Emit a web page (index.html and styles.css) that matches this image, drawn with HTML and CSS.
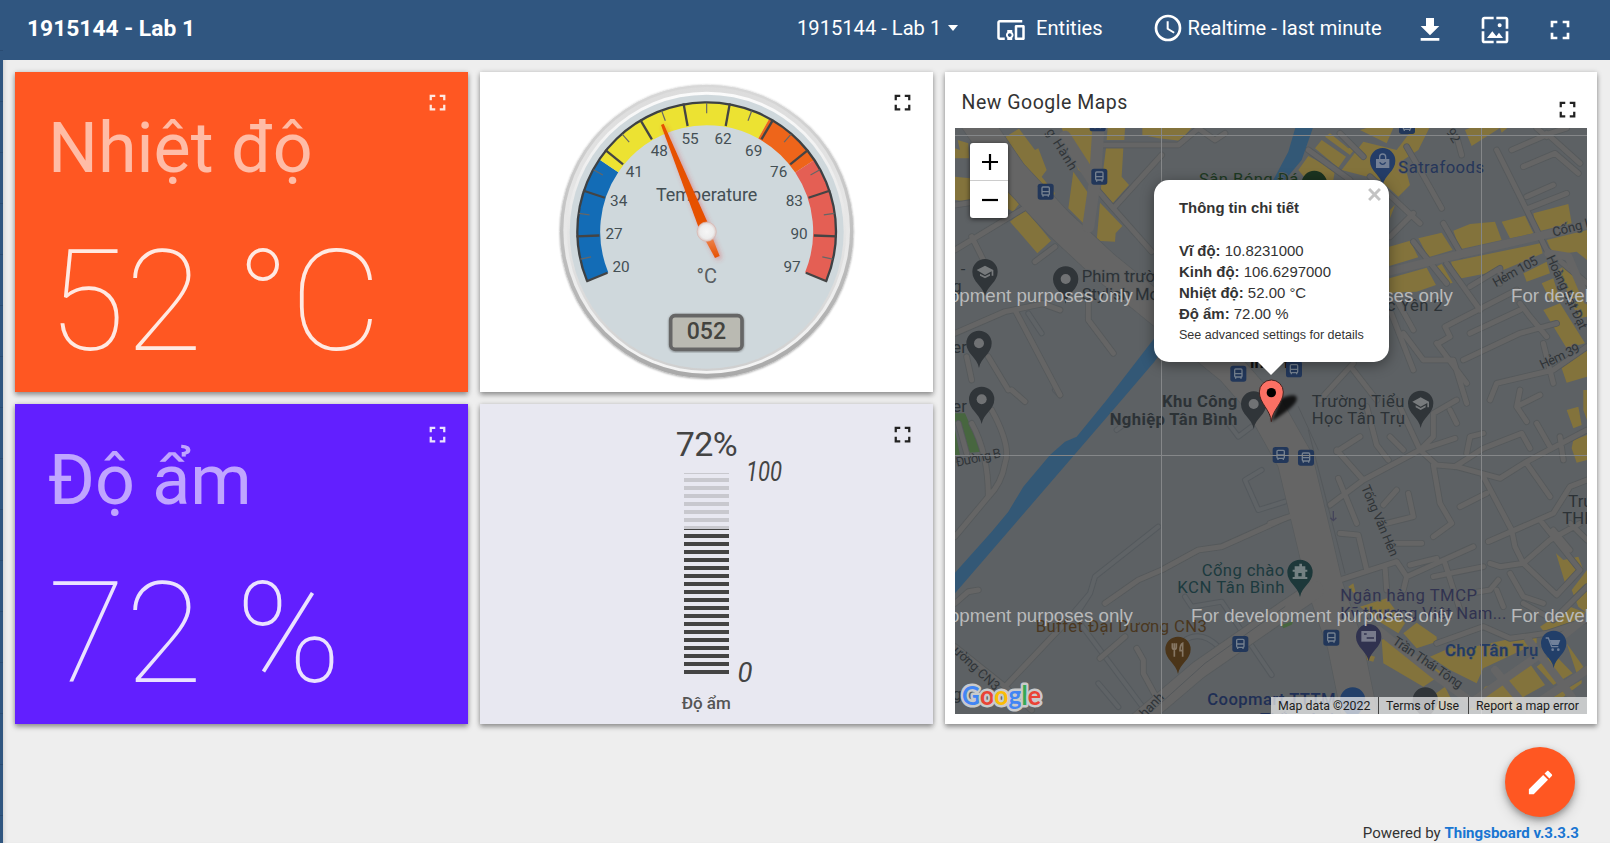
FILE: index.html
```html
<!DOCTYPE html>
<html lang="vi">
<head>
<meta charset="utf-8">
<title>1915144 - Lab 1</title>
<link rel="stylesheet" href="styles.css">
</head>
<body>
<svg class="defs" width="0" height="0">
  <symbol id="i-full" viewBox="0 0 24 24"><path d="M7 14H5v5h5v-2H7v-3zm-2-4h2V7h3V5H5v5zm12 7h-3v2h5v-5h-2v3zM14 5v2h3v3h2V5h-5z"/></symbol>
</svg>
<div class="app">
  <aside class="side"></aside>
  <div class="main">
    <header class="bar">
      <h1 class="title">1915144 - Lab 1</h1>
      <nav class="tools">
        <span class="state">1915144 - Lab 1</span>
        <span class="caret"></span>
        <svg class="i30" viewBox="0 0 24 24"><path d="M3 6h18V4H3c-1.1 0-2 .9-2 2v12c0 1.1.9 2 2 2h4v-2H3V6zm10 6H9v1.780c-.61.550-1 1.330-1 2.220s.390 1.670 1 2.220V20h4v-1.780c.610-.550 1-1.340 1-2.220s-.390-1.670-1-2.220V12zm-2 5.500c-.830 0-1.500-.670-1.500-1.500s.670-1.500 1.500-1.500 1.500.670 1.500 1.500-.670 1.500-1.500 1.500zM22 8h-6c-.5 0-1 .5-1 1v10c0 .5.5 1 1 1h6c.5 0 1-.5 1-1V9c0-.5-.5-1-1-1zm-1 10h-4v-8h4v8z"/></svg>
        <span class="entities">Entities</span>
        <svg class="i32" viewBox="0 0 24 24"><circle cx="12" cy="12" r="9" fill="none" stroke="#fff" stroke-width="2"/><path d="M12.500 7H11v6l5.250 3.150.750-1.230-4.500-2.670z"/></svg>
        <span class="time">Realtime - last minute</span>
        <svg class="i32 act" viewBox="0 0 24 24"><path d="M19 9h-4V3H9v6H5l7 7 7-7zM5 18v2h14v-2H5z"/></svg>
        <svg class="i32 act" viewBox="0 0 24 24"><path d="M4 4h7V2H4c-1.100 0-2 .9-2 2v7h2V4zm6 9l-4 5h12l-3-4-2.030 2.710L10 13zm7-4.500c0-.830-.670-1.500-1.500-1.500S14 7.670 14 8.500s.670 1.500 1.500 1.500S17 9.330 17 8.500zM20 2h-7v2h7v7h2V4c0-1.100-.9-2-2-2zm0 18h-7v2h7c1.100 0 2-.9 2-2v-7h-2v7zM4 13H2v7c0 1.100.9 2 2 2h7v-2H4v-7z"/></svg>
        <svg class="i32 act"><use href="#i-full"/></svg>
      </nav>
    </header>

    <main class="grid">
      <section class="card temp">
        <svg class="full"><use href="#i-full"/></svg>
        <div class="label">Nhiệt độ</div>
        <div class="value">52 °C</div>
      </section>

      <section class="card">
        <svg class="full"><use href="#i-full"/></svg>
        <svg class="draw" viewBox="0 0 453 320">
          <defs>
            <linearGradient id="rim" x1="0" y1="0" x2="0" y2="1"><stop offset="0" stop-color="#d8d8d8"/><stop offset="1" stop-color="#a9a9a9"/></linearGradient>
            <linearGradient id="rim2" x1="0" y1="0" x2="0" y2="1"><stop offset="0" stop-color="#dcdcdc"/><stop offset="1" stop-color="#f4f4f4"/></linearGradient>
            <linearGradient id="rim3" x1="0" y1="0" x2="0" y2="1"><stop offset="0" stop-color="#fbfbfb"/><stop offset="1" stop-color="#cfcfcf"/></linearGradient>
            <radialGradient id="knob"><stop offset="0" stop-color="#f6f6f6"/><stop offset=".7" stop-color="#ededed"/><stop offset="1" stop-color="#dcc9c6"/></radialGradient>
            <linearGradient id="tail" x1="0" y1="0" x2="0" y2="1"><stop offset="0" stop-color="#ef9468"/><stop offset="1" stop-color="#e65100"/></linearGradient>
            <filter id="glow" x="-50%" y="-50%" width="200%" height="200%"><feDropShadow dx="6" dy="6" stdDeviation="8" flood-color="#e04040" flood-opacity=".45"/></filter>
            <filter id="sh" x="-10%" y="-10%" width="120%" height="120%"><feDropShadow dx="0" dy="2" stdDeviation="3" flood-color="#000" flood-opacity=".45"/></filter>
          </defs>
          <g transform="translate(60 -2) scale(.33333)">
            <g transform="translate(500 484)">
              <circle r="440" fill="url(#rim)" filter="url(#sh)"/>
              <circle cy="-3" r="430" fill="url(#rim2)"/>
              <circle r="419" fill="url(#rim3)"/>
              <circle cy="1" r="411" fill="#cfd8dc"/>
              <g fill="none" stroke-width="67" transform="translate(0 1)">
                <circle r="353" pathLength="360" stroke="#136cb6" stroke-dasharray="56.400 360" transform="rotate(157.500)"/>
                <circle r="353" pathLength="360" stroke="#ece232" stroke-dasharray="85.100 360" transform="rotate(213.900)"/>
                <circle r="353" pathLength="360" stroke="#ee651a" stroke-dasharray="27.300 360" transform="rotate(299)"/>
                <circle r="353" pathLength="360" stroke="#e45f54" stroke-dasharray="56.200 360" transform="rotate(326.300)"/>
                <circle r="388" pathLength="360" stroke="#3d4144" stroke-width="7" stroke-dasharray="225 360" transform="rotate(157.500)"/>
              </g>
              <g stroke="#444" stroke-width="7" transform="translate(0 1)">
                <path d="M322 0h69" transform="rotate(157.500)"/><path d="M322 0h69" transform="rotate(177.950)"/><path d="M322 0h69" transform="rotate(198.410)"/><path d="M322 0h69" transform="rotate(218.860)"/><path d="M322 0h69" transform="rotate(239.320)"/><path d="M322 0h69" transform="rotate(259.770)"/><path d="M322 0h69" transform="rotate(280.230)"/><path d="M322 0h69" transform="rotate(300.680)"/><path d="M322 0h69" transform="rotate(321.140)"/><path d="M322 0h69" transform="rotate(341.590)"/><path d="M322 0h69" transform="rotate(2.050)"/><path d="M322 0h69" transform="rotate(22.500)"/>
              </g>
              <g stroke="#666" stroke-width="3.500" transform="translate(0 1)">
                <path d="M355 0h32" transform="rotate(167.730)"/><path d="M355 0h32" transform="rotate(188.180)"/><path d="M355 0h32" transform="rotate(208.640)"/><path d="M355 0h32" transform="rotate(229.090)"/><path d="M355 0h32" transform="rotate(249.550)"/><path d="M355 0h32" transform="rotate(270)"/><path d="M355 0h32" transform="rotate(290.450)"/><path d="M355 0h32" transform="rotate(310.910)"/><path d="M355 0h32" transform="rotate(331.360)"/><path d="M355 0h32" transform="rotate(351.820)"/><path d="M355 0h32" transform="rotate(12.270)"/>
              </g>
            </g>
            <g class="nums">
              <text x="243" y="605">20</text><text x="222" y="508">27</text><text x="236" y="409">34</text><text x="283" y="322">41</text><text x="358" y="258">48</text><text x="450" y="222">55</text><text x="549" y="222">62</text><text x="641" y="258">69</text><text x="716" y="322">76</text><text x="763" y="409">83</text><text x="777" y="508">90</text><text x="756" y="605">97</text>
            </g>
            <text class="gt" x="500" y="394" textLength="304">Temperature</text>
            <text class="gu" x="500" y="640">°C</text>
            <g filter="url(#glow)">
              <path fill="#e65100" d="M363 165L371 161L513 480L475 470z"/>
              <path fill="url(#tail)" d="M486 492L510 484L539 558L525 564z"/>
            </g>
            <circle cx="500" cy="485" r="29" fill="url(#knob)" stroke="#d9b5ae" stroke-width="2"/>
            <rect x="392" y="737" width="214" height="101" rx="13" fill="#babab2" stroke="#666" stroke-width="11" filter="url(#sh)"/>
            <text class="lcd" x="440" y="806" textLength="118" lengthAdjust="spacingAndGlyphs">052</text>
          </g>
        </svg>
      </section>

      <section class="card map-card">
        <div class="map-head"><span>New Google Maps</span><svg class="mfull"><use href="#i-full"/></svg></div>
        <div class="map">
          <svg class="draw" viewBox="955 128 632 586">
            <defs>
              <path id="pin" d="M0 74C-6 42-38 32-38 0A38 38 0 1 1 38 0C38 32 6 42 0 74z"/>
              <g id="poi"><use href="#pin"/><circle r="15" fill="#707274"/></g>
              <g id="school"><use href="#pin"/><path fill="#777a7c" d="M-25-5L0-18 25-5V12H20V-1L0 10zM-15 6L0 14 15 6V12L0 20-15 12z"/></g>
              <g id="bus"><rect x="-24" y="-24" width="48" height="48" rx="8" fill="#22375a"/><rect x="-11" y="-14" width="22" height="24" rx="3" fill="none" stroke="#74808f" stroke-width="4"/><path d="M-11 0H11M-8 9v6M8 9v6" stroke="#74808f" stroke-width="4"/></g>
              <filter id="blur" x="-50%" y="-50%" width="200%" height="200%"><feGaussianBlur stdDeviation="5"/></filter>
              <g id="lanes">
                <path d="M30 540L245 410M80 500L130 600M30 790L180 725 300 700M475 225H700L760 175 810 210 840 190M650 255L505 415 620 545M505 415L440 340M430 700V750L505 850M210 720L345 975M65 860L80 930M130 860L190 960M290 700L345 720M270 575L330 530M30 405L75 398"/>
                <g transform="translate(975)"><path d="M680 240L770 420 830 540 951 640M725 240L840 190 890 174M760 290L855 250 925 310M770 380L850 345M775 415L890 370M830 190L930 280M410 230L445 290 515 415M560 200L575 255M520 460L575 555M430 515L530 640M530 580L630 720M360 500L430 430M300 320L450 460M600 650L690 595V640M750 720L600 790M505 820L540 800 525 770 740 660M400 790L460 870 550 870 590 1000M580 870L750 790 860 760M750 700L780 740 830 800M820 820L850 940M660 990L680 940 850 900 951 830M115 240L240 330M210 190L280 260M380 690L430 780M500 820L590 940M800 174L830 200M360 720L430 900M250 880L150 990M250 900L320 990"/></g>
                <g transform="translate(0 960)"><path d="M140 60Q200 170 180 220Q170 280 130 320L30 440M80 100Q130 190 130 320M40 100L65 190M480 640L580 570 650 540 760 480 830 470 1020 385M465 805L540 740M575 775L595 810V850L650 951M350 710L180 890 220 951M30 640L70 605 100 600M30 770L180 890 260 960M200 0L240 35"/></g>
                <g transform="translate(975 960)"><path d="M290 50L320 165 355 210M380 30L450 180 500 225 560 230 690 265 770 215 951 120M210 570L380 515 410 560 610 470M180 345L280 270 450 180 555 145M555 230L640 175 755 130 780 175M450 180L490 140V70L560 30M540 60L560 100M490 225L510 340 545 400 490 440M640 260L725 420 735 470 760 520M655 455L850 370 900 290 951 270M770 220L840 320M570 350L650 310M810 390L930 540 860 615 760 520 690 530 660 520M760 520L840 450 930 400M345 530L350 600M525 520L570 660M420 525L500 505 M490 560L640 530M410 560L400 600M200 180L280 270M200 185L270 140M205 265L260 400M210 430L265 435 290 540M340 345L380 300M350 400L430 380 415 310M360 460H455M720 550L760 620 820 640M600 610L660 600 685 570M500 760L640 710 720 745 830 730 951 690M750 0L740 50 770 95M750 45L810 15M800 100L840 170M880 210L870 140M590 190L600 140 640 130M360 140L400 180M0 400L75 375M850 420L900 480M900 400L951 450M760 640L850 690 951 590M680 600L700 650"/></g>
              </g>
              <path id="faint" d="M515 1080L560 1045M640 1370L450 1520 435 1570 390 1640 600 1920M435 1570L350 1670M950 1200L900 1230 940 1320 1020 1295M850 1060L880 1100 920 1070M720 1580L740 1610 830 1595 980 1815M460 1840L520 1911M330 960L345 975M720 1710Q770 1680 820 1730M250 730L290 790"/>
            </defs>
            <rect x="955" y="128" width="632" height="586" fill="#5d6164"/>
            <g transform="translate(945 70) scale(.33333)">
              <g fill="none" stroke-linecap="round" stroke-linejoin="round">
                <use href="#faint" stroke="#54595d" stroke-width="18"/><use href="#faint" stroke="#5f6366" stroke-width="12"/>
              </g>
              <path fill="#83733c" d="M175 205L222 176 270 240 280 235 305 300 290 320 330 370 325 380 265 325 255 310zM350 174H447L440 330 400 300zM385 305L430 370 415 460 370 415zM488 174H540L538 210H485zM483 235H535L530 320 552 345 503 400 467 360zM465 398L532 468 512 490 510 515 455 512zM592 174H740L705 212 640 205 592 195zM195 455L240 417 318 512 277 550zM30 320L75 325V395L30 390zM185 350L225 398 205 425 185 415zM38 210L70 220 72 265 30 265V235L45 240z"/>
              <path transform="translate(975)" fill="#83733c" d="M135 235L155 210 228 260 205 293zM165 200L180 190 235 235 260 230 240 255zM270 180L290 174H370L350 220zM430 174H478L445 240 400 270 420 345 385 380 330 330 215 300 280 215 380 240zM85 300L115 258 195 300 190 330H110zM585 180L600 174H690L605 228zM690 174H712L695 188zM358 530L420 512 445 562 358 588zM445 505L515 488 548 540 475 562zM550 482L600 462 675 455 695 510 570 538zM695 455L765 437 790 490 720 505zM790 430L895 402 905 460 800 485zM358 625L470 593 498 645 440 665 358 668zM498 590L515 582 548 638 525 645zM543 575L810 520 818 550 700 600 560 628zM760 610L830 575 840 610 770 635zM830 510L951 480V570L920 545 850 555zM865 600L910 570 951 680V740L925 745zM815 640L850 625 870 690 840 690zM820 720L870 700 945 820 890 835zM870 880L951 840V920L890 938zM360 420L375 405 360 445z"/>
              <path transform="translate(975 960)" fill="#83733c" d="M890 60L925 50 935 105 910 115zM940 0H951V90L940 60zM910 150L951 135V210L920 218 905 175zM858 490L880 510 925 500 940 540 885 578zM905 600L951 540V670L925 650zM235 590L250 580 260 620zM270 650L350 625 405 700 385 730 320 690zM335 750L350 740 520 850 460 890 340 820zM400 730L440 698 500 740V755L440 775zM480 800L560 765 590 775 800 730V760L640 835 620 880 540 840zM810 710L900 650 951 670V690L830 735zM645 890L690 880 745 921 760 960H600zM708 860L780 822 825 885 760 921H745zM800 830L850 790 908 850 850 885zM890 760L940 830 920 850zM850 921L935 870V880L880 921zM280 790L315 800 310 815 290 810zM430 960L525 890 560 960z"/>
              <path fill="#47663f" d="M30 1030H60L110 1145 75 1148 30 1060zM30 1080L45 1155H30zM1010 1665L1045 1652 1040 1664 1015 1675z"/>
              <g fill="none" stroke-linecap="round" stroke-linejoin="round">
                <use href="#lanes" stroke="#55595b" stroke-width="20"/>
                <path stroke="#575b5d" stroke-width="94" d="M90 150L200 310 340 460 480 590 640 720 860 900 975 1030"/>
                <path stroke="#575b5d" stroke-width="110" d="M960 1010L1050 1170 1110 1420 1140 1550 1200 1720 1255 1990"/>
                <path stroke="#575b5d" stroke-width="58" d="M560 1970L760 1800 1020 1620 1110 1560"/>
                <use href="#lanes" stroke="#656565" stroke-width="15"/>
                <path stroke="#656565" stroke-width="90" d="M90 150L200 310 340 460 480 590 640 720 860 900 975 1030"/>
                <path stroke="#656565" stroke-width="106" d="M960 1010L1050 1170 1110 1420 1140 1550 1200 1720 1255 1990"/>
                <path stroke="#656565" stroke-width="53" d="M560 1970L760 1800 1020 1620 1110 1560"/>
                <path stroke="#656565" stroke-width="36" d="M460 174L450 330 430 470M450 340L360 200"/>
                <path stroke="#656565" stroke-width="24" d="M1333 605L1515 560 1775 500 1926 465M1300 1680L1475 1820 1600 1910M1590 1890L1675 1830 1775 1760 1926 1640M1750 1710L1880 1880M1650 1800L1750 1920M1775 1900L1926 1800M1810 550L1870 560 1926 690"/>
                <path stroke="#54585b" stroke-width="3" d="M1090 1080L1180 1430 1200 1510M1060 1010L1120 1140M580 1960L780 1780 1020 1610"/>
              </g>
              <path fill="#335876" d="M30 1508L140 1385 190 1325 235 1250 315 1155 360 1115 395 1100 485 990 628 805 985 330 1030 245 1052 170H1105L1070 270 1020 330 628 875 530 990 30 1570z"/>
              <g class="lbl">
                <text x="410" y="636">Phim trường</text><text x="410" y="690">Stylish Models</text>
                <text x="22" y="850">er</text><text x="22" y="1026">er</text><text x="47" y="615">-</text><text x="22" y="665">g</text>
                <text x="762" y="345" fill="#1d3a22" textLength="298">Sân Bóng Đá</text>
                <text x="1360" y="308" fill="#26365a" textLength="257">Satrafoods</text>
                <text x="1325" y="724" textLength="168">c Yên 2</text>
                <g class="b"><text x="877" y="1012" text-anchor="end" textLength="226">Khu Công</text><text x="877" y="1065" text-anchor="end" textLength="383">Nghiệp Tân Bình</text><text x="915" y="895" fill="#111">in tr ĐT</text></g>
                <text x="1100" y="1011" textLength="278">Trường Tiểu</text><text x="1100" y="1063" textLength="280">Học Tân Trụ</text>
                <text x="1018" y="1518" text-anchor="end" fill="#1c3a3e" textLength="248">Cổng chào</text><text x="1018" y="1570" text-anchor="end" fill="#1c3a3e" textLength="321">KCN Tân Bình</text>
                <text x="272" y="1685" fill="#4a3720" textLength="514">Buffet Đại Dương CN3</text>
                <text x="1186" y="1593" fill="#313350" textLength="410">Ngân hàng TMCP</text><text x="1186" y="1646" fill="#313350" textLength="498">Kỹ thương Việt Nam...</text>
                <text x="1500" y="1757" fill="#223a63" textLength="280" class="m">Chợ Tân Trụ</text>
                <text x="787" y="1904" fill="#1f2f55" textLength="385" class="m">Coopmart TTTM</text><text x="945" y="1965" fill="#1f2f55" class="m">Thắng Lợi</text>
                <text x="1870" y="1311">Trường</text><text x="1852" y="1363">THPT</text><text x="22" y="1890">g</text>
                <g class="s">
                  <text transform="translate(302 185) rotate(58)" textLength="140">g Hành</text>
                  <text transform="translate(35 1190) rotate(-12)" textLength="138">Đường B</text>
                  <text transform="translate(22 1745) rotate(43)">ường CN3</text>
                  <text transform="translate(600 1945) rotate(-46)">hanh</text>
                  <text transform="translate(1502 185) rotate(58)">92</text>
                  <text transform="translate(1826 500) rotate(-15)">Cống Lở</text>
                  <text transform="translate(1652 652) rotate(-29)" textLength="148">Hẻm 105</text>
                  <text transform="translate(1803 563) rotate(65)" textLength="240">Hoàng Bật Đạt</text>
                  <text transform="translate(1792 898) rotate(-25)" textLength="128">Hẻm 39</text>
                  <text transform="translate(1248 1252) rotate(67)" textLength="228">Tống Văn Hên</text>
                  <text transform="translate(1340 1720) rotate(34)" textLength="244">Trần Thái Tông</text>
                </g>
              </g>
              <g fill="#303539">
                <use href="#school" x="120" y="605"/><use href="#poi" x="362" y="627"/><use href="#poi" x="102" y="820"/><use href="#poi" x="110" y="988"/><use href="#poi" x="926" y="1002"/><use href="#school" x="1427" y="1000"/><use href="#pin" x="1441" y="1890"/>
              </g>
              <use href="#pin" x="1108" y="340" fill="#1b3320"/>
              <g transform="translate(1313 272)"><use href="#pin" fill="#243d68"/><path d="M-20-5H20V22H-20z" fill="#738096"/><path d="M-9-5v-6a9 9 0 0 1 18 0v6" fill="none" stroke="#738096" stroke-width="4"/><path d="M-9 5q9 12 18 0" fill="none" stroke="#243d68" stroke-width="4"/></g>
              <g transform="translate(1065 1507)"><use href="#pin" fill="#1d383a"/><path fill="#738082" d="M-22-8H-16V-18H-2V-26H6V-18H16V-8H22V-2H16V14H22V20H-22V14H-16V-2H-22z"/><path fill="#1d383a" d="M-5 2H5V12H-5z"/></g>
              <g transform="translate(1271 1700)"><use href="#pin" fill="#30324f"/><path fill="#777a8b" d="M-22-17H22V15H-22z"/><path d="M-14-8h8M-6 4h22" stroke="#30324f" stroke-width="5"/></g>
              <g transform="translate(1826 1720)"><use href="#pin" fill="#223f69"/><path d="M-24-16h8l10 26h20" fill="none" stroke="#71819a" stroke-width="4"/><path d="M-12-10h32l-6 15h-20z" fill="#71819a"/><circle cx="-3" cy="19" r="4" fill="#71819a"/><circle cx="14" cy="19" r="4" fill="#71819a"/></g>
              <use href="#pin" x="1223" y="1890" fill="#223f69"/>
              <g transform="translate(699 1738)"><use href="#pin" fill="#4b3519"/><path d="M-17-18v12q0 6 6 6t6-6v-12M-11-18V22M14 22V-18q-8 4-8 22h8" fill="none" stroke="#857663" stroke-width="5"/></g>
              <use href="#bus" x="463" y="320"/><use href="#bus" x="302" y="365"/><use href="#bus" x="458" y="160"/><use href="#bus" x="880" y="911"/><use href="#bus" x="1386" y="168"/><use href="#bus" x="1047" y="898"/><use href="#bus" x="1007" y="1155"/><use href="#bus" x="1083" y="1163"/><use href="#bus" x="886" y="1722"/><use href="#bus" x="1159" y="1703"/>
              <path d="M1165 1323v28m-9-8l9 9 9-9" stroke="#45455a" stroke-width="4" fill="none"/>
            </g>
            <path d="M955 135.500H1587M955 455.500H1587M1161.500 128V714M1481.500 128V714" stroke="#858789" fill="none"/>
            <g class="water"><text x="871" y="302">For development purposes only</text><text x="1191" y="302">For development purposes only</text><text x="1511" y="302">For development purposes only</text><text x="871" y="622">For development purposes only</text><text x="1191" y="622">For development purposes only</text><text x="1511" y="622">For development purposes only</text></g>
            <g transform="translate(945 70) scale(.33333)">
              <path d="M979 1055L1008 985Q1060 965 1055 990Q1050 1010 979 1055z" fill="#000" opacity=".8" filter="url(#blur)"/>
              <path d="M979 1055C977 1020 943 1000 943 966A36 36 0 1 1 1015 966C1015 1000 981 1020 979 1055z" fill="#fb7064" stroke="#40221f" stroke-width="3"/>
              <circle cx="979" cy="968" r="14"/>
            </g>
            <text class="glogo" x="962" y="704.500" textLength="79" lengthAdjust="spacingAndGlyphs"><tspan fill="#4285f4">G</tspan><tspan fill="#ea4335">o</tspan><tspan fill="#fbbc05">o</tspan><tspan fill="#4285f4">g</tspan><tspan fill="#34a853">l</tspan><tspan fill="#ea4335">e</tspan></text>
          </svg>
          <div class="zoom"><span class="zb"><svg viewBox="0 0 16 16"><path d="M0 8H16M8 0V16"/></svg></span><span class="zb"><svg viewBox="0 0 16 16"><path d="M0 8H16"/></svg></span></div>
          <div class="popup">
            <svg class="x" viewBox="0 0 12 12"><path d="M1 1L11 11M11 1L1 11"/></svg>
            <b class="pt">Thông tin chi tiết</b>
            <div><b>Vĩ độ:</b> 10.8231000</div>
            <div><b>Kinh độ:</b> 106.6297000</div>
            <div><b>Nhiệt độ:</b> 52.00 °C</div>
            <div><b>Độ ẩm:</b> 72.00 %</div>
            <div class="small">See advanced settings for details</div>
          </div>
          <div class="attr"><span class="a1">Map data ©2022</span><span class="a2">Terms of Use</span><span class="a3">Report a map error</span></div>
        </div>
      </section>

      <section class="card hum">
        <svg class="full"><use href="#i-full"/></svg>
        <div class="label">Độ ẩm</div>
        <div class="value">72 %</div>
      </section>

      <section class="card level">
        <svg class="full"><use href="#i-full"/></svg>
        <svg class="draw" viewBox="480 404 453 320">
          <defs>
            <pattern id="off" width="45" height="8" y="478" x="684" patternUnits="userSpaceOnUse"><path fill="#c8c8ce" d="M0 0H45V4H0z"/></pattern>
            <pattern id="on" width="45" height="8" y="534" x="684" patternUnits="userSpaceOnUse"><path fill="#444" d="M0 0H45V4H0z"/></pattern>
          </defs>
          <path fill="#c8c8ce" d="M684 473h45v1h-45z"/>
          <path fill="url(#off)" d="M684 478h45v51h-45z"/>
          <path fill="#444" d="M684 529h45v1h-45z"/>
          <path fill="url(#on)" d="M684 534h45v140h-45z"/>
          <text x="706.700" y="455.500" class="pc" textLength="62">72%</text>
          <text x="746" y="480.500" class="seg" textLength="36" lengthAdjust="spacingAndGlyphs">100</text>
          <text x="737.500" y="682" class="seg">0</text>
          <text x="706.300" y="708.500" class="nm" textLength="49">Độ ẩm</text>
        </svg>
      </section>
    </main>

    <button class="fab"><svg viewBox="0 0 24 24"><path d="M3 17.250V21h3.750L17.810 9.940l-3.750-3.750L3 17.250zM20.710 7.040c.390-.390.390-1.020 0-1.410l-2.340-2.340c-.390-.390-1.020-.390-1.410 0l-1.830 1.830 3.750 3.750 1.830-1.830z"/></svg></button>
    <footer class="foot">Powered by <b>Thingsboard v.3.3.3</b></footer>
  </div>
</div>
</body>
</html>
```
FILE: styles.css
```css
* { box-sizing: border-box; }
body { margin: 0; font-family: Roboto, "Noto Sans", sans-serif; color: #333; background: #eee; overflow: hidden; }
.defs { position: absolute; }
.app { display: flex; width: 1610px; height: 843px; }
.side { width: 3px; background: repeating-linear-gradient(#305680 0 50px, #2a4c73 50px 51px); }
.main { flex: 1; display: flex; flex-direction: column; background: #eee; box-shadow: inset 4px 0 4px -3px rgba(0,0,0,.15); }
.bar { height: 60px; background: #305680; color: #fff; display: flex; align-items: center; justify-content: space-between; padding: 0 34px 4px 24px; }
.title { margin: 0; font-size: 22.800px; font-weight: 700; white-space: nowrap; }
.tools { display: flex; align-items: center; font-size: 20.150px; white-space: nowrap; fill: #fff; }
.state { width: 151px; }
.caret { border: 5.500px solid transparent; border-top: 6px solid #fff; border-bottom: 0; margin-right: 38px; }
.i30 { width: 30px; height: 30px; margin-right: 10px; position: relative; top: 2px; }
.entities { width: 116px; }
.i32 { width: 32px; height: 32px; }
.time { width: 197px; padding-left: 3.500px; }
.act { margin-left: 33px; position: relative; top: 2px; }
.grid { display: grid; grid-template-columns: 453px 453px 652px; grid-template-rows: 320px 320px; gap: 12px; padding: 12px; }
.card { position: relative; background: #fff; box-shadow: 0 3px 5px rgba(0,0,0,.35), 0 0 5px rgba(0,0,0,.15); min-width: 0; }
.map-card { grid-row: 1 / 3; grid-column: 3; padding: 0 10px; }
.draw { display: block; width: 100%; height: 100%; }
.full { position: absolute; width: 27px; height: 27px; right: 17px; top: 17px; fill: #222; }
.temp, .hum { color: #fff; padding: 36px 0 0 33px; }
.temp { background: #ff5722; }
.hum { background: #621fff; }
.temp .full, .hum .full { fill: #fff; opacity: .87; }
.label { font-size: 70px; line-height: 80px; opacity: .6; }
.value { font-size: 141px; line-height: 160px; font-weight: 100; margin-top: 34px; opacity: .87; white-space: pre; }
.level { background: #e8e8f1; }
.nums { font-size: 46px; fill: #444f54; text-anchor: middle; }
.gt { font-size: 54px; fill: #444f54; text-anchor: middle; }
.gu { font-size: 60px; fill: #5a5f62; text-anchor: middle; }
.lcd { font: 500 70px Roboto, sans-serif; fill: #44443f; }
.pc { font-size: 34px; fill: #444; text-anchor: middle; }
.nm { font-size: 17px; font-weight: 500; fill: #555; text-anchor: middle; }
.seg { font: italic 27.500px Roboto, sans-serif; fill: #444; }

.map-head { height: 56px; display: flex; justify-content: space-between; padding: 18px 6.500px 0 6.500px; font-size: 19.500px; line-height: 26px; letter-spacing: .5px; color: #333; }
.mfull { width: 27px; height: 27px; margin-top: 6px; fill: #222; }
.map { position: relative; width: 632px; height: 586px; overflow: hidden; }
.lbl { font-size: 50px; fill: #2c3236; stroke: #5d6164; stroke-width: 4px; paint-order: stroke; }
.lbl .b { font-weight: 700; }
.lbl .m { font-weight: 500; }
.lbl .s { font-size: 39px; fill: #303437; }
.water { font: 18.700px "Liberation Sans", sans-serif; fill: #b9babb; }
.glogo { font: 700 27px Lato, sans-serif; stroke: #c9cacb; stroke-width: 5px; paint-order: stroke; stroke-linejoin: round; }
.zoom { position: absolute; left: 15px; top: 15px; width: 38px; height: 75px; background: #fff; border-radius: 3px; box-shadow: 0 1px 5px rgba(0,0,0,.65); }
.zb { height: 37px; display: flex; align-items: center; justify-content: center; }
.zb + .zb { border-top: 1px solid #ccc; height: 38px; }
.zb svg { width: 16px; height: 16px; stroke: #000; stroke-width: 2.200; margin-left: 1px; }
.popup { position: absolute; left: 199px; top: 52px; width: 235px; height: 182px; background: #fff; border-radius: 15px; box-shadow: 0 3px 14px rgba(0,0,0,.4); padding: 18px 0 0 25px; font: 14.950px/21px "Liberation Sans", sans-serif; color: #333; white-space: nowrap; }
.popup::after { content: ""; position: absolute; left: 104px; top: 182px; border: 13px solid transparent; border-top-color: #fff; border-bottom: 0; }
.pt { display: block; margin-bottom: 21px; font-size: 14.900px; }
.small { font-size: 12.550px; line-height: 22px; }
.x { position: absolute; right: 8px; top: 8px; width: 13px; height: 13px; stroke: #c3c3c3; stroke-width: 2.700; }
.attr { position: absolute; right: 0; bottom: 0; height: 17px; display: flex; font-size: 12.350px; line-height: 18px; color: #1c1c1c; background: rgba(245,245,245,.7); white-space: nowrap; }
.attr span { padding-left: 7px; }
.attr span + span { border-left: 1px solid #444; }
.a1 { width: 107px; }
.a2 { width: 90px; }
.a3 { width: 119px; }
.fab { position: absolute; left: 1505px; top: 747px; width: 70px; height: 70px; border: 0; border-radius: 50%; background: #ff5722; display: flex; align-items: center; justify-content: center; box-shadow: 0 3px 6px rgba(0,0,0,.3), 0 6px 14px rgba(0,0,0,.16); }
.fab svg { width: 31px; height: 31px; fill: #fff; }
.foot { margin: auto 31px 0 auto; font-size: 15.050px; line-height: 20px; }
.foot b { color: #1976d2; font-weight: 700; }
```
